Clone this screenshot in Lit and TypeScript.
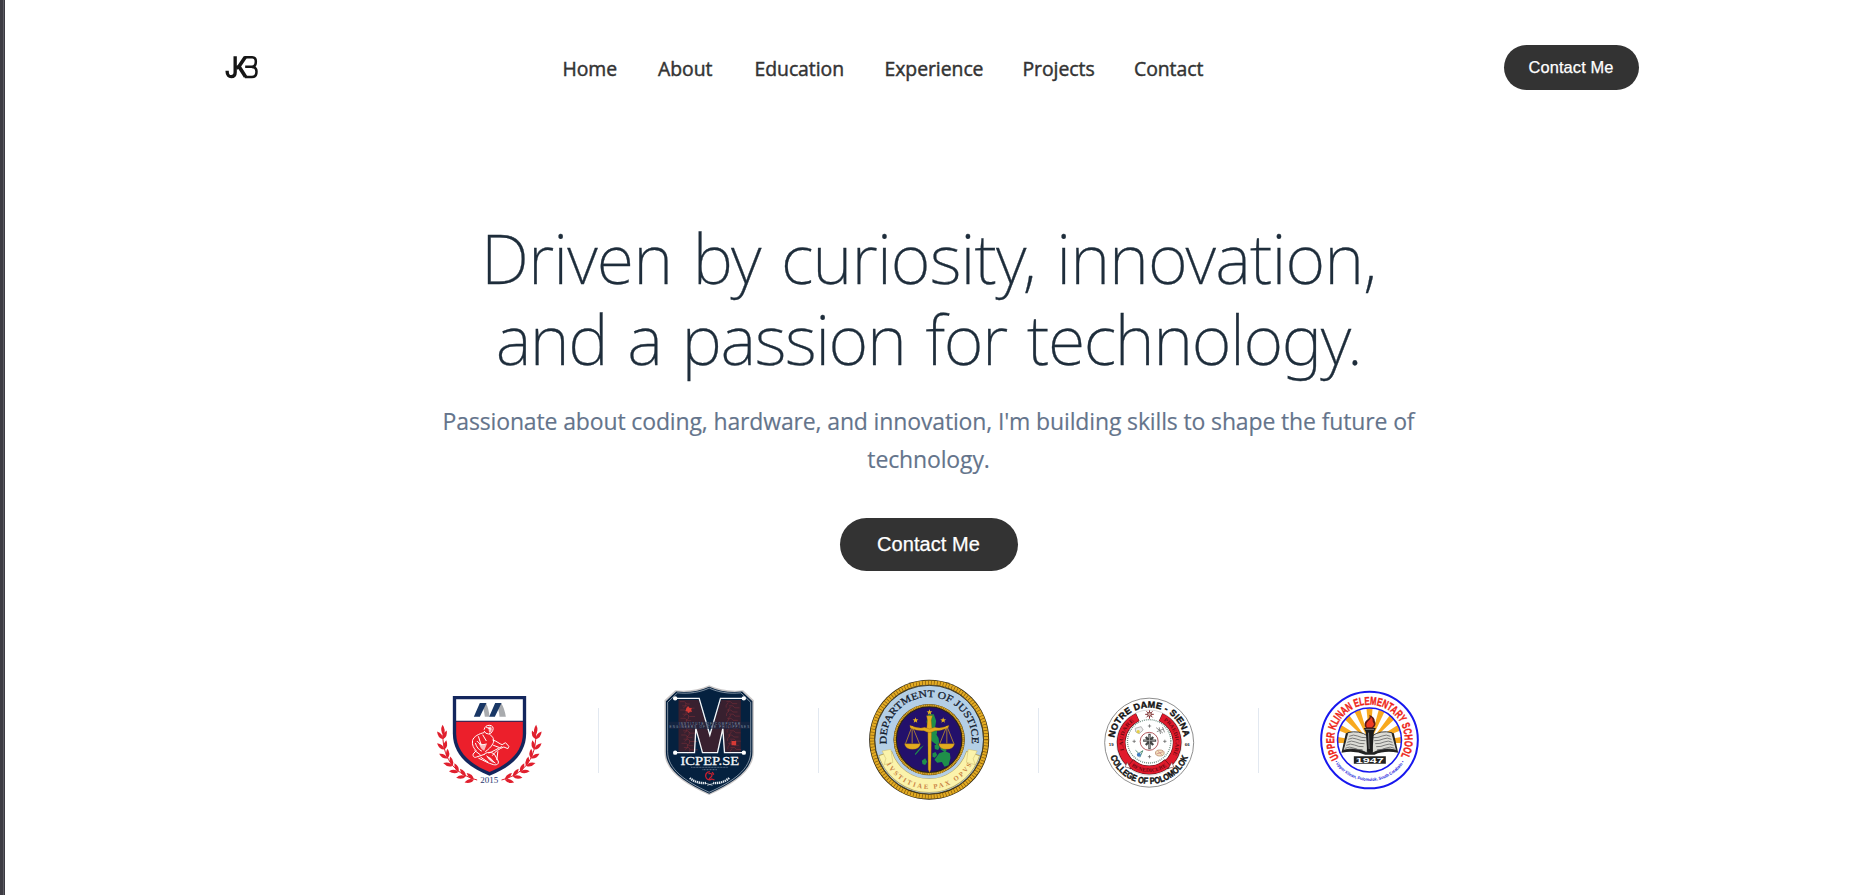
import { LitElement, html, svg, css } from "lit";

const NAV = ["Home", "About", "Education", "Experience", "Projects", "Contact"];

const pt = (cx: number, cy: number, r: number, deg: number) => {
  const a = (deg * Math.PI) / 180;
  return `${(cx + r * Math.cos(a)).toFixed(1)} ${(cy + r * Math.sin(a)).toFixed(1)}`;
};

/** Arc from one angle to another; angles grow clockwise from the right. */
const arc = (cx: number, cy: number, r: number, from: number, to: number) =>
  `M${pt(cx, cy, r, from)}A${r} ${r} 0 ${Math.abs(to - from) > 180 ? 1 : 0} ${to > from ? 1 : 0} ${pt(cx, cy, r, to)}`;

const arcLength = (r: number, from: number, to: number) => (Math.abs(to - from) * Math.PI * r) / 180;

const curved = (id: string, cls: string, text: string, cx: number, cy: number, r: number, from: number, to: number, adjust = "spacingAndGlyphs") => svg`
  <path id=${id} fill="none" d=${arc(cx, cy, r, from, to)} />
  <text class=${cls}><textPath href="#${id}" textLength=${arcLength(r, from, to) - 1} lengthAdjust=${adjust}>${text}</textPath></text>`;

const star = (x: number, y: number, r: number) => {
  const p: string[] = [];
  for (let i = 0; i < 10; i++) p.push(pt(x, y, i % 2 ? r * 0.42 : r, -90 + i * 36));
  return svg`<path d="M${p.join("L")}Z" fill="#e8b41c" />`;
};

class BrandMark extends LitElement {
  static styles = css`
    :host { display: block; width: 46px; height: 45px; }
    svg { display: block; width: 100%; height: 100%; }
  `;
  render() {
    return html`<svg viewBox="657.5 46 138 135" fill="none" stroke="#151515" role="img" aria-label="JKB">
      <path stroke-width="10" d="M682 123v3c0 10 6 15 12 15 8 0 12-5 12-13V80" />
      <path stroke-width="11" d="M709 115l8-4 19-28M717 110l20 31" />
      <path stroke-width="7.5" d="M733 82.500h24c8 0 11 6 11 13 0 9-4 16-12 16h-20M756 112c10 0 14 6 14 14 0 10-5 16-14 16h-21" />
    </svg>`;
  }
}
customElements.define("brand-mark", BrandMark);

class RedShieldSeal extends LitElement {
  static styles = css`
    svg { display: block; }
    .year { font: 23px "Liberation Serif", serif; fill: #27386f; }
  `;
  laurel() {
    const p = [[67, 178], [70, 244], [110, 284], [160, 299]];
    const leaves = [];
    const n = 7;
    for (let i = 0; i < n; i++) {
      const t = i / (n - 1), u = 1 - t;
      const at = (k: number) => u * u * u * p[0][k] + 3 * u * u * t * p[1][k] + 3 * u * t * t * p[2][k] + t * t * t * p[3][k];
      const dv = (k: number) => 3 * u * u * (p[1][k] - p[0][k]) + 6 * u * t * (p[2][k] - p[1][k]) + 3 * t * t * (p[3][k] - p[2][k]);
      const x = at(0), y = at(1);
      const ang = (Math.atan2(-dv(1), -dv(0)) * 180) / Math.PI;
      for (const side of [-30, 30]) {
        leaves.push(svg`<path transform="translate(${x} ${y}) rotate(${ang + side})" d="M0 0Q12-11 29-2Q14 10 0 0Z" />`);
      }
    }
    return svg`<path d="M67 164C67 244 110 284 170 300" fill="none" stroke="#e01f2d" stroke-width="3" />
      <path d="M66 134Q78 150 69 168Q57 151 66 134Z" />${leaves}`;
  }
  render() {
    return html`<svg width="140" height="120" viewBox="-4.5 0 420 360">
      <path fill="#13265d" d="M97 48H317V160C317 222 272 262 207 287C142 262 97 222 97 160Z" />
      <path fill="#fff" d="M107 58H307V122H107Z" />
      <path fill="#ec1f2b" d="M107 125H307V160C307 216 266 252 207 276C148 252 107 216 107 160Z" />
      <path fill="#a9abae" d="M186 69h10q9 16 11 41h-14q-3-26-12-41zM231 69h11q10 16 14 41h-19q-2-26-12-41z" />
      <path fill="#193765" d="M160 110L178 69H198L178 110ZM206 110L224 69H243L223 110Z" />
      <g fill="none" stroke="#fff" stroke-width="3" stroke-linecap="round" stroke-linejoin="round">
        <path d="M191 148q3-13 17-12q13 2 9 15q-3 10-13 11q-9 0-13-8" />
        <path d="M190 158c-14 3-31 11-34 24c-2 13 4 24 11 30l-9 10c-2 8 4 12 10 9l24-8" />
        <path d="M208 164c10 5 15 17 9 27c-4 10-15 18-22 24M170 184c7 9 17 12 27 8M174 170l8 25M187 165l10 17" />
        <path d="M217 180c12 3 20 12 28 14l10-6l10 11l-3 7l-12-5c-13 5-26 13-34 25" />
        <path d="M192 222c12-9 25-5 31 3l10 18c3 9-4 13-14 11c-16-4-30-13-44-19M199 228c8 7 17 15 25 21M205 219c12-4 25-13 39-19" />
        <path d="M163 212l16 12M165 190c3 11 9 19 18 23M219 196l16 6M181 232l21 14M198 142l12 5M232 215l-3 24" />
      </g>
      <path fill="#fff" opacity=".7" d="M203 142q9-6 11 4q0 10-8 12zM198 229q14 1 24 20q-15-3-24-20zM175 188q12 9 24 4l-8 20q-13-7-16-24z" />
      <g fill="#e01f2d">${this.laurel()}</g>
      <g fill="#e01f2d" transform="translate(413 0) scale(-1 1)">${this.laurel()}</g>
      <text class="year" x="179" y="308" textLength="54" lengthAdjust="spacingAndGlyphs">2015</text>
    </svg>`;
  }
}
customElements.define("red-shield-seal", RedShieldSeal);

class IcpepSeal extends LitElement {
  static styles = css`
    svg { display: block; }
    .tiny { font: 9px "Liberation Sans", sans-serif; fill: #8595aa; }
    .name { font: 36px "Liberation Serif", serif; fill: #f4f6f8; stroke: #f4f6f8; stroke-width: 0.8; }
  `;
  render() {
    const m = "M84 75H144L178 184L212 75H271V230H221L217 160L200 232H156L136 160L132 230H84Z";
    const shield = "M176 31C205 44 240 50 278 46L310 76V232C310 286 254 326 176 360C98 326 42 286 42 232V76L74 46C112 50 148 44 176 31Z";
    const traces = [];
    for (let i = 0; i < 12; i++) {
      const y = 80 + i * 12.5;
      const dx = (i * 7) % 13;
      traces.push(svg`<path d="M${88 + dx} ${y}h14l7 7h${9 + dx}M${106 + dx} ${y + 4}v9l-8 6M${228 + dx} ${y}h12l6 6h14M${233 + dx} ${y + 3}l-6 8v7" />`);
    }
    return html`<svg width="120" height="130" viewBox="-4.5 0 360 390">
      <path fill="#c9c6c6" d=${shield} />
      <path fill="#05213f" transform="translate(176 195) scale(.968 .976) translate(-176 -195)" d=${shield} />
      <path fill="none" stroke="#c9d2dc" stroke-width="2" transform="translate(176 195) scale(.93 .95) translate(-176 -195)" d=${shield} />
      <path fill="#38202f" d=${m} />
      <g fill="none" stroke="#85303a" stroke-width="1.500">${traces}</g>
      <path fill="#d63a35" d="M108 98l6-4 3 5 7 0-2 6 3 5-7 0-4 5-4-6-5-2zM243 198h14v13h-14z" />
      <g fill="none" stroke="#f5f7f9" stroke-width="4">
        <path d="M75 70H146L178 180L210 70H279" />
        <path d="M75 233H132L136 160L156 233H201L217 160L222 233H279" />
      </g>
      <g fill="#fff"><circle cx="74" cy="70" r="6.500" /><circle cx="280" cy="70" r="6.500" /><circle cx="74" cy="233" r="6.500" /><circle cx="280" cy="233" r="6.500" /></g>
      <path fill="#1c2742" opacity=".6" d="M55 140H298V162H55Z" />
      <text class="tiny" x="85" y="149" textLength="184">INSTITUTE OF COMPUTER</text>
      <text class="tiny" x="57" y="160" textLength="239">ENGINEERS OF THE PHILIPPINES</text>
      <text class="name" x="90" y="270" textLength="176" lengthAdjust="spacingAndGlyphs">ICPEP.SE</text>
      <path stroke="#8593a6" stroke-width="2" stroke-dasharray="3 1.500" d="M122 277H232M156 284H199" />
      <path fill="none" stroke="#c9202f" stroke-width="4" d="M178 290c-12 1-16 12-10 20c5 6 12 5 17 1M174 297c5-4 13 0 10 6s-9 6-8 11M185 291l5 8M184 312l8 3" />
      <g fill="none" stroke="#e8edf2">
        <path stroke-width="7" stroke-dasharray="4 2" d="M118 309C132 322 150 325 168 324M236 309C222 322 204 325 188 324" />
        <path stroke-width="2" d="M166 325l20 6M190 325l-20 6" />
      </g>
    </svg>`;
  }
}
customElements.define("icpep-seal", IcpepSeal);

class JusticeSeal extends LitElement {
  static styles = css`
    svg { display: block; }
    .ring { font: 30px "Liberation Serif", serif; fill: #14202e; stroke: #14202e; stroke-width: 0.8; }
    .motto { font: bold 20px "Liberation Serif", serif; fill: #c98243; }
  `;
  render() {
    const cx = 206, cy = 209;
    return html`<svg width="140" height="140" viewBox="-4.5 0 420 420">
      <circle cx=${cx} cy=${cy} r="180" fill="#2b230f" />
      <circle cx=${cx} cy=${cy} r="171" fill="none" stroke="#e3ab22" stroke-width="13" />
      <circle cx=${cx} cy=${cy} r="171" fill="none" stroke="#7d5710" stroke-width="13" stroke-dasharray="2 7" />
      <circle cx=${cx} cy=${cy} r="163" fill="#b4cfe6" stroke="#3b3012" stroke-width="2.500" />
      <path d=${arc(cx, cy, 138, 163, 17)} fill="none" stroke="#b7a65d" stroke-width="43" />
      <path d=${arc(cx, cy, 138, 162, 18)} fill="none" stroke="#fbf3ab" stroke-width="39" />
      <path fill="#fbf3ab" stroke="#c9b76b" stroke-width="1.500" d="M65 243L91 238L97 277L71 284L76 266ZM350 243L323 238L318 277L344 284L338 266Z" />
      <circle cx=${cx} cy=${cy} r="107" fill="#2d2410" />
      <circle cx=${cx} cy=${cy} r="103" fill="none" stroke="#dca827" stroke-width="6" />
      <circle cx=${cx} cy=${cy} r="103" fill="none" stroke="#77540f" stroke-width="6" stroke-dasharray="1.500 4" />
      <circle cx=${cx} cy=${cy} r="97" fill="#23106b" />
      <path fill="#1f8f4a" d="M206 133l14 0 7 20-3 18 6 14-2 9 6 10 2 14-6 8-8-6-12-10-6-40-6-14 4-20zM190 226l-10 12-15 17-2-3 17-20zM184 272l10-7 6 10-6 10-8-3zM222 226l10-3 6 8-5 9-10-3zM240 226l12 4 6 12-6 4-12-8zM216 250l9-4 5 9-7 8-7-3zM236 250l18-6 14 6 2 14-6 22-12 4-8-14-14 2-8-9 6-8z" />
      <g fill="#e3ab1e" stroke="#8a5c0b" stroke-width="1">
        <path d="M202 180h11l-2 118-4 10-4-10z" />
        <path d="M198 137h18l-4 14 2 22 8 6-7 7h-16l-8-7 8-6 2-22z" />
        <path d="M148 166q28 12 44 6l15 5 16-5q18 6 42-6l-1 6q-22 12-40 10l-17 6-17-6q-20 2-41-9z" />
        <path d="M132 221h48q-3 17-24 17t-24-17zM234 221h48q-3 17-24 17t-24-17z" />
      </g>
      <path fill="none" stroke="#e3ab1e" stroke-width="2" d="M155 168L135 221M155 168L177 221M155 168V220M259 168L238 221M259 168L280 221M259 168V220" />
      ${star(165, 151, 9)}${star(248, 151, 9)}${star(207, 127, 9)}
      ${curved("dept", "ring", "DEPARTMENT OF JUSTICE", cx, cy, 128, 174, 366)}
      ${curved("motto", "motto", "IVSTITIAE PAX OPVS", cx, cy, 148, 150, 30, "spacing")}
    </svg>`;
  }
}
customElements.define("justice-seal", JusticeSeal);

class SienaSeal extends LitElement {
  static styles = css`
    svg { display: block; }
    .ring { font: bold 27px "Liberation Sans", sans-serif; fill: #111; stroke: #111; stroke-width: 1.2; }
    .ribbon { font: bold 16px "Liberation Serif", serif; fill: #6d0911; }
    .year { font: bold 13px "Liberation Sans", sans-serif; fill: #222; }
  `;
  render() {
    const cx = 176, cy = 173;
    const sparks = [0, 90, 180, 270].map((a) => {
      const [x, y] = pt(177, 169, 46, a).split(" ");
      return svg`<path d="M${x} ${y}m-5 0h10m-5-5v10" stroke="#555" stroke-width="2" />`;
    });
    return html`<svg width="120" height="120" viewBox="-4.5 -15 360 360">
      <circle cx=${cx} cy=${cy} r="133.500" fill="#fff" stroke="#777" stroke-width="2.500" />
      <circle cx=${cx} cy=${cy} r="98" fill="#fff" stroke="#999" stroke-width="1" />
      <g fill="none">
        <path stroke="#4d1115" stroke-width="26" d=${arc(cx, cy, 84, 125, 246)} />
        <path stroke="#4d1115" stroke-width="26" d=${arc(cx, cy, 84, -66, 55)} />
        <path stroke="#e01a2c" stroke-width="23" d=${arc(cx, cy, 84, 126, 245)} />
        <path stroke="#e01a2c" stroke-width="23" d=${arc(cx, cy, 84, -65, 54)} />
        <path stroke="#4d1115" stroke-width="27" d=${arc(cx, cy, 82, 133, 47)} />
        <path stroke="#e01a2c" stroke-width="24" d=${arc(cx, cy, 82, 132, 48)} />
        <circle cx=${cx} cy="169" r="65" stroke="#6f8f83" stroke-width="4" stroke-dasharray="3 3" />
        <circle cx=${cx} cy="169" r="27" stroke="#a33a40" stroke-width="2.500" />
      </g>
      <path fill="#fff" stroke="#4d1115" stroke-width="1.500" d="M120 250l-16-4 6-14zM234 250l16-4-6-14z" />
      <path stroke="#444" stroke-width="7" d="M177 146V193M158 167H197M166 156L188 180M188 156L166 180" />
      <path stroke="#bbb" stroke-width="2" d="M177 150V190M160 167H194" />
      <path stroke="#8a3034" stroke-width="3" d="M164 88H190M177 76V101M168 79L186 97M186 79L168 97" />
      <circle cx="177" cy="88" r="6" fill="#d5a7a0" stroke="#5b2023" stroke-width="2" />
      ${sparks}
      <g stroke-width="2.500" fill="none">
        <path stroke="#aaa" fill="#eee" d="M134 130l18-5 6 10-12 11-10-5z" /><circle cx="143" cy="140" r="5" fill="#e5cf47" stroke="none" />
        <path stroke="#777" d="M197 128l20 16M199 140l20-8M206 127l4 20M216 126l6 16" />
        <path stroke="#3d8269" d="M135 196l10 9 12-8-9 20" /><circle cx="145" cy="209" r="6" fill="#427bc0" stroke="none" />
        <ellipse cx="208" cy="204" rx="13" ry="9" fill="#f4e3bc" stroke="#bb8d72" /><path stroke="#c88" d="M198 207l20-7M202 199l12 10" />
      </g>
      ${curved("red-l", "ribbon", "LAUDARE", cx, cy, 79, 163, 236)}
      ${curved("red-r", "ribbon", "PRAEDICARE", cx, cy, 79, -57, 28)}
      ${curved("red-b", "ribbon", "BENEDICERE", cx, cy, 88, 127, 53)}
      ${curved("top", "ring", "NOTRE DAME - SIENA", cx, cy, 105, 188, 351, "spacing")}
      ${curved("bot", "ring", "COLLEGE OF POLOMOLOK", cx, cy, 124, 160, 20)}
      <text class="year" x="55" y="184">19</text>
      <text class="year" x="283" y="184">66</text>
    </svg>`;
  }
}
customElements.define("siena-seal", SienaSeal);

class KlinanSeal extends LitElement {
  static styles = css`
    svg { display: block; }
    .ring { font: bold 34px "Liberation Sans", sans-serif; fill: #ee2417; stroke: #ee2417; stroke-width: 1.2; }
    .place { font: bold 13px "Liberation Sans", sans-serif; fill: #2222dd; }
    .year { font: bold 22px "Liberation Sans", sans-serif; fill: #fff; }
  `;
  render() {
    const cx = 177, cy = 180;
    const rays = [];
    for (let i = 0; i < 9; i++) {
      const a = 180 + i * 22.5;
      rays.push(svg`<path d="M178 188L${pt(cx, cy, 95, a - 5.5)}L${pt(cx, cy, 95, a + 5.5)}Z" fill="#f8a91f" />`);
    }
    const lines = [];
    for (let i = 0; i < 5; i++) {
      const y = 169 + i * 9;
      lines.push(svg`<path d="M${116 - i * 3} ${y}q13-7 25-1t27 5M${240 + i * 3} ${y}q-13-7-25-1t-27 5" />`);
    }
    return html`<svg width="120" height="120" viewBox="-4.5 0 360 360">
      <circle cx=${cx} cy=${cy} r="145" fill="#fff" stroke="#1717ee" stroke-width="6" />
      <circle cx=${cx} cy=${cy} r="96" fill="#fff" />
      ${rays}
      <circle cx=${cx} cy=${cy} r="96" fill="none" stroke="#1717ee" stroke-width="4.500" />
      <path fill="#222" d="M112 158L106 160L93 218Q135 211 164 224H192Q221 211 263 218L250 160L244 158L190 170H166Z" />
      <path fill="#dcdcd6" stroke="#222" stroke-width="2.500" d="M112 158Q146 149 173 169L170 219Q137 200 98 211ZM244 158Q210 149 183 169L186 219Q219 200 258 211Z" />
      <g fill="none" stroke="#666" stroke-width="2.500">${lines}</g>
      <path fill="#1b1b1b" d="M160 144H196L190 157L186 214H170L166 157Z" />
      <path stroke="#aaa" stroke-width="2" d="M174 158L176 207M165 148H191" />
      <path fill="#5b1815" d="M166 145Q157 130 169 120Q181 112 176 104Q193 110 193 124Q199 134 188 145Z" />
      <path fill="#ef3b24" d="M169 142Q164 130 174 122Q182 117 181 110Q189 117 187 126Q195 133 184 142Z" />
      <path fill="#222" d="M130 229H226V251H130Z" />
      <text class="year" x="136" y="248" textLength="84" lengthAdjust="spacingAndGlyphs">1947</text>
      ${curved("school", "ring", "UPPER KLINAN ELEMENTARY SCHOOL", cx, cy, 106, 149, 388)}
      ${curved("place", "place", "• Upper Klinan, Polomolok, South Cotabato •", cx, cy, 123, 148, 32)}
    </svg>`;
  }
}
customElements.define("klinan-seal", KlinanSeal);

class AppRoot extends LitElement {
  static styles = css`
    :host {
      display: block;
      box-sizing: border-box;
      height: 895px;
      overflow: hidden;
      background: #fff;
      font-family: "Open Sans", sans-serif;
    }
    .page { display: flex; height: 100%; }
    .edge { width: 5px; flex: none; background: linear-gradient(90deg, #3d3c43 0 3px, #5c5c63 3px 4px, #3a3940 4px 5px); }
    .main { flex: 1; display: flex; flex-direction: column; align-items: center; }
    .header {
      width: 1420px;
      margin-top: 45px;
      height: 45px;
      display: flex;
      justify-content: space-between;
      align-items: center;
    }
    .nav {
      display: grid;
      grid-template-columns: 55.5px 56.5px 90px 98px 71.5px 72px;
      column-gap: 40px;
      padding: 2px 0 0 0.5px;
      font-size: 19.4px;
      line-height: 26px;
      color: #333;
      white-space: nowrap;
      letter-spacing: -0.05px;
      -webkit-text-stroke: 0.45px #333;
    }
    .pill {
      display: flex;
      align-items: center;
      justify-content: center;
      box-sizing: border-box;
      border: 0;
      padding: 0;
      background: #333;
      color: #fff;
      font-family: "Liberation Sans", Arial, sans-serif;
      white-space: nowrap;
      -webkit-text-stroke: 0.25px #fff;
    }
    .small { width: 135px; height: 45px; border-radius: 23px; font-size: 16.4px; letter-spacing: 0.1px; }
    .large { width: 178px; height: 53px; border-radius: 27px; font-size: 20px; letter-spacing: 0.05px; margin-top: 40px; }
    .title {
      margin: 127px 0 0;
      font-family: "Noto Sans", sans-serif;
      font-weight: 200;
      font-size: 68.4px;
      line-height: 81px;
      word-spacing: 3.7px;
      color: #1e2d3b;
      text-align: center;
      white-space: nowrap;
      -webkit-text-stroke: 0.3px #1e2d3b;
    }
    .first { letter-spacing: -0.87px; }
    .second { letter-spacing: -1.4px; }
    .lead {
      margin: 23px 0 0;
      font-size: 23px;
      line-height: 38px;
      letter-spacing: -0.14px;
      color: #64748b;
      text-align: center;
      white-space: nowrap;
      -webkit-text-stroke: 0.15px #64748b;
    }
    .logos { margin-top: 84px; width: 1100px; display: grid; grid-template-columns: repeat(5, 220px); height: 170px; }
    .cell { display: flex; align-items: center; justify-content: center; }
    .cell:not(:last-child) { background: linear-gradient(#e2e8f0, #e2e8f0) 100% 50% / 1px 65px no-repeat; }
  `;
  render() {
    return html`<div class="page">
      <div class="edge"></div>
      <div class="main">
        <header class="header">
          <brand-mark></brand-mark>
          <nav class="nav">${NAV.map((n) => html`<span>${n}</span>`)}</nav>
          <button class="pill small">Contact Me</button>
        </header>
        <h1 class="title"><span class="first">Driven by curiosity, innovation,</span><br /><span class="second">and a passion for technology.</span></h1>
        <p class="lead">Passionate about coding, hardware, and innovation, I'm building skills to shape the future of<br />technology.</p>
        <button class="pill large">Contact Me</button>
        <section class="logos">
          <div class="cell"><red-shield-seal></red-shield-seal></div>
          <div class="cell"><icpep-seal></icpep-seal></div>
          <div class="cell"><justice-seal></justice-seal></div>
          <div class="cell"><siena-seal></siena-seal></div>
          <div class="cell"><klinan-seal></klinan-seal></div>
        </section>
      </div>
    </div>`;
  }
}
customElements.define("app-root", AppRoot);
